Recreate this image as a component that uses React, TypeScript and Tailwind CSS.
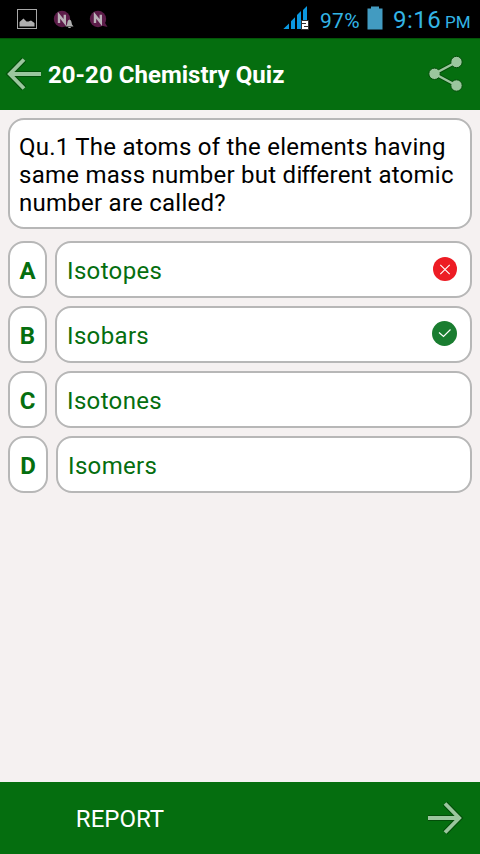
import React from "react";

type Result = "wrong" | "right" | null;

const options: { letter: string; text: string; result: Result; width: string }[] = [
  { letter: "A", text: "Isotopes", result: "wrong", width: "w-[39px]" },
  { letter: "B", text: "Isobars", result: "right", width: "w-[39px]" },
  { letter: "C", text: "Isotones", result: null, width: "w-[39px]" },
  { letter: "D", text: "Isomers", result: null, width: "w-[40px]" },
];

function StatusBar() {
  return (
    <div className="flex h-[38px] shrink-0 items-start bg-black text-[#33b5e5]">
      <svg className="shrink-0" width="120" height="38" viewBox="0 0 120 38">
        <rect x="17.5" y="9.5" width="19" height="19" fill="none" stroke="#a8a8a8" />
        <path d="M19.5 26.5V22L23.5 18.5L26.5 21.5H28.5L31 20.5L34.5 23V26.5Z" fill="#b0b0b0" />
        <circle cx="62" cy="19" r="8.2" fill="#5c1c49" />
        <path d="M59 23V15.2L64.8 22.6V14.7" fill="none" stroke="#b9b1b7" strokeWidth="2.4" />
        <path d="M69.5 19.5C67.3 20.3 67.5 22.5 67 24.5L65.5 26.5H73.5L72 24.5C71.5 22.5 71.7 20.3 69.5 19.5ZM68.3 27H70.7V28H68.3Z" fill="#b0b0b0" />
        <circle cx="98" cy="19" r="8.2" fill="#5c1c49" />
        <path d="M101 25.5L104.5 22L107.5 27Z" fill="#5c1c49" />
        <path d="M95 23V15.2L100.8 22.6V14.7" fill="none" stroke="#b9b1b7" strokeWidth="2.4" />
      </svg>
      <svg className="ml-[163px] shrink-0" width="27" height="38" viewBox="283 0 27 38">
        <path d="M283.3 29L289 23.6V29ZM291 29V21.2L295 17.2V29ZM297 29V15L301 11V29ZM303 29V10L307 6V29Z" fill="#0b98e0" />
        <rect x="301" y="20" width="8" height="10" fill="#333" />
        <path d="M302 21H308V26H304V27H308V29H302V24H306V23H302Z" fill="#fff" />
      </svg>
      <span className="ml-[10px] w-[40px] whitespace-nowrap pt-[9px] text-[21px] leading-[24px] tracking-[0.3px]">97%</span>
      <svg className="ml-[7px] shrink-0" width="16" height="38" viewBox="367 0 16 38">
        <path d="M371 6.5H379V8.5H382.5V29.5H367.5V8.5H371Z" fill="#429bc1" />
      </svg>
      <span className="ml-[10px] w-[48px] whitespace-nowrap pt-[6px] text-[24px] leading-[29px] tracking-[0.5px]">9:16</span>
      <span className="ml-[4px] whitespace-nowrap pt-[12px] text-[17px] leading-[20px]">PM</span>
    </div>
  );
}

function BackIcon() {
  return (
    <svg className="mb-[2px]" width="40" height="40" viewBox="5 54 40 40" fill="none">
      <path d="M24 59.5L9.8 74L24 88.5M10 74H41" stroke="#034d09" strokeWidth="6" />
      <path d="M24 59.5L9.8 74L24 88.5M10 74H41" stroke="#9bc69e" strokeWidth="3.8" />
    </svg>
  );
}

function ForwardIcon() {
  return (
    <svg width="40" height="40" viewBox="425 798 40 40" fill="none">
      <path d="M445 803.5L459.2 818L445 832.5M459 818H428" stroke="#034d09" strokeWidth="6" />
      <path d="M445 803.5L459.2 818L445 832.5M459 818H428" stroke="#9bc69e" strokeWidth="3.8" />
    </svg>
  );
}

function ShareIcon() {
  return (
    <svg className="mb-[2px]" width="40" height="40" viewBox="426 54 40 40">
      <path d="M456.5 62L434.5 73.8L456.5 85.5" fill="none" stroke="#034d09" strokeWidth="4.2" />
      <g fill="#9bc69e" stroke="#034d09">
        <circle cx="456.5" cy="62" r="5.7" />
        <circle cx="434.5" cy="73.8" r="5.7" />
        <circle cx="456.5" cy="85.5" r="5.7" />
      </g>
      <path d="M456.5 62L434.5 73.8L456.5 85.5" fill="none" stroke="#9bc69e" strokeWidth="2.4" />
    </svg>
  );
}

function ResultIcon({ result }: { result: Result }) {
  if (result === "wrong") {
    return (
      <svg className="mr-[12px] mb-[1px]" width="26" height="26" viewBox="432 256 26 26">
        <circle cx="445" cy="269" r="12" fill="#ed1c24" />
        <path d="M440.3 264.8L449.7 274.2M449.7 264.8L440.3 274.2" stroke="#fff" strokeWidth="1.1" />
      </svg>
    );
  }
  if (result === "right") {
    return (
      <svg className="mr-[12px] mb-[1px]" width="26" height="26" viewBox="432 321 26 26">
        <circle cx="444.5" cy="333.5" r="12.5" fill="#1a7d30" />
        <path d="M439 332.5L443.5 336.5L450.5 329.5" fill="none" stroke="#fff" strokeWidth="1.2" />
      </svg>
    );
  }
  return null;
}

export default function App() {
  return (
    <div className="flex h-[854px] w-[480px] flex-col overflow-hidden bg-[#f5f1f1] font-['Roboto',sans-serif]">
      <StatusBar />
      <header className="flex h-[72px] shrink-0 items-center justify-between border-t border-[#045509] bg-[#056e0f] pr-[14px] pl-[5px] text-white">
        <div className="flex items-center">
          <BackIcon />
          <h1 className="ml-[3px] whitespace-nowrap text-[24px] leading-[28px] font-bold tracking-[0.03px]">20-20 Chemistry Quiz</h1>
        </div>
        <ShareIcon />
      </header>
      <main className="flex flex-1 flex-col px-[8px] pt-[8px]">
        <div className="h-[111px] shrink-0 rounded-[16px] border-2 border-[#b7b7b7] bg-white px-[9px] pt-[13px] text-[24px] leading-[28px] tracking-[0.25px] whitespace-nowrap text-black">
          <div>Qu.1 The atoms of the elements having</div>
          <div>
            same mass number but d<span className="tracking-[-0.8px]">iff</span>erent atomic
          </div>
          <div>number are called?</div>
        </div>
        <div className="mt-[12px] flex flex-col gap-[8px] text-[24px] leading-[28px] text-[#056e0f]">
          {options.map((option) => (
            <div key={option.letter} className="flex h-[57px] gap-[8px]">
              <div className={`${option.width} flex shrink-0 items-center justify-center rounded-[16px] border-2 border-[#b7b7b7] bg-white pt-[2px] font-bold`}>
                {option.letter}
              </div>
              <div className="flex flex-1 items-center justify-between rounded-[16px] border-2 border-[#b7b7b7] bg-white pl-[10px]">
                <span className="pt-[2px] tracking-[0.35px]">{option.text}</span>
                <ResultIcon result={option.result} />
              </div>
            </div>
          ))}
        </div>
      </main>
      <footer className="flex h-[72px] shrink-0 items-center justify-between bg-[#056e0f] pr-[15px] text-white">
        <span className="w-[240px] pt-[2px] text-center text-[24px] leading-[28px]">REPORT</span>
        <ForwardIcon />
      </footer>
    </div>
  );
}
